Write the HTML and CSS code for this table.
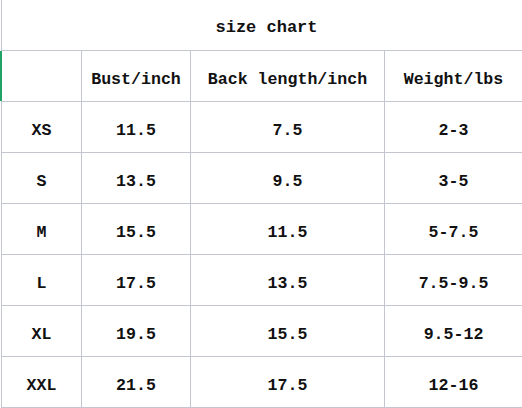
FILE: index.html
```html
<!DOCTYPE html>
<html>
<head>
<meta charset="utf-8">
<link rel="stylesheet" href="styles.css">
</head>
<body>
<div class="sheet">
  <div class="title">size chart</div>
  <div class="grid">
    <div class="cell"></div><div class="cell">Bust/inch</div><div class="cell">Back length/inch</div><div class="cell last">Weight/lbs</div>
    <div class="cell">XS</div><div class="cell">11.5</div><div class="cell">7.5</div><div class="cell last">2-3</div>
    <div class="cell">S</div><div class="cell">13.5</div><div class="cell">9.5</div><div class="cell last">3-5</div>
    <div class="cell">M</div><div class="cell">15.5</div><div class="cell">11.5</div><div class="cell last">5-7.5</div>
    <div class="cell">L</div><div class="cell">17.5</div><div class="cell">13.5</div><div class="cell last">7.5-9.5</div>
    <div class="cell">XL</div><div class="cell">19.5</div><div class="cell">15.5</div><div class="cell last">9.5-12</div>
    <div class="cell">XXL</div><div class="cell">21.5</div><div class="cell">17.5</div><div class="cell last">12-16</div>
  </div>
  <div class="marker"></div>
</div>
</body>
</html>
```
FILE: styles.css
```css
* { box-sizing: border-box; }
html, body { margin: 0; padding: 0; background: #fff; }
body {
  width: 522px;
  height: 408px;
  overflow: hidden;
  font-family: "Liberation Mono", "DejaVu Sans Mono", monospace;
  font-size: 16.6px;
  font-weight: bold;
  color: #111;
}
.sheet {
  position: relative;
  margin-left: 1px;
  border-left: 1px solid #c3c6cf;
  height: 408px;
}
.title {
  height: 51px;
  border-bottom: 1px solid #c3c6cf;
  display: flex;
  align-items: center;
  justify-content: center;
  padding-top: 4px;
  padding-left: 9px;
  font-size: 17px;
}
.grid {
  display: grid;
  grid-template-columns: 80px 109px 194px 1fr;
  grid-auto-rows: 51px;
}
.cell {
  border-right: 1px solid #c3c6cf;
  border-bottom: 1px solid #c3c6cf;
  display: flex;
  align-items: center;
  justify-content: center;
  padding-top: 6px;
}
.cell.last { border-right: none; }
.marker {
  position: absolute;
  left: -2px;
  top: 51px;
  width: 2px;
  height: 50px;
  background: #21a366;
}
```
